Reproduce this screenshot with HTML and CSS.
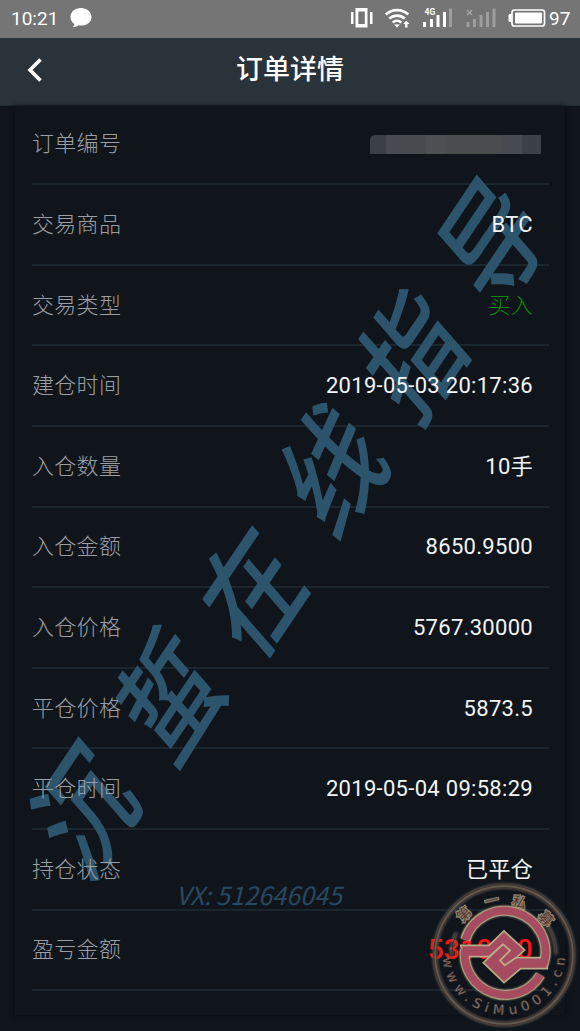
FILE: index.html
```
<!DOCTYPE html>
<html lang="zh-CN">
<head>
  <meta charset="UTF-8">
  <meta name="viewport" content="width=device-width, initial-scale=1.0">
  <title>订单详情</title>
  <link rel="stylesheet" href="styles.css">
</head>
<body>
  <!-- 状态栏 -->
  <div class="status-bar">
    <span class="time">10:21</span>
    <svg class="chat" width="22" height="20" viewBox="0 0 22 20"><path d="M11 0C5 0 .5 3.800 .5 9c0 3 1.500 5.500 3.900 7-.2 1.200-.8 2.300-1.700 3.300 2.300 0 4.200-.7 5.700-2 .8.2 1.700.3 2.600.3 6 0 10.500-3.700 10.500-8.600S17 0 11 0z" fill="#fff"/></svg>
    <svg class="status-icons" width="200" height="38" viewBox="350 0 200 38" fill="#fff">
      <path d="M350 12h2.500v12H350zM369 12h2.500v12H369z"/>
      <path fill-rule="evenodd" d="M354.500 8h12v19.500h-12zM357.300 11.500v12.500h6.500V11.500z"/>
      <g fill="none" stroke="#fff" stroke-width="2.700">
        <path d="M384.800 14.500a16.500 16.500 0 0 1 22.500 0"/>
        <path d="M388.300 18.600a11.500 11.500 0 0 1 15.500 0"/>
        <path d="M391.800 22.500a6.500 6.500 0 0 1 8.500 0"/>
      </g>
      <path d="M393 24.500h6l-3 3z"/>
      <path d="M405.300 20.500l3.200 3.500h-2v3.500h-2.400V24h-2z"/>
      <text class="net" x="423.500" y="15">4G</text>
      <path d="M422 22h3v5h-3zM429 19h3v8h-3zM435.500 15h3v12h-3zM442 12h3v15h-3z"/>
      <path opacity=".3" d="M448 8.500h3V27h-3zM465.500 22h3v5h-3zM472 19h3v8h-3zM478.500 15h3v12h-3zM485 12h3v15h-3zM491.500 8.500h3V27h-3z"/>
      <path d="M466 10l5 5M471 10l-5 5" stroke="#a3a3a3" stroke-width="1.500"/>
      <rect x="511" y="10" width="32.500" height="16" rx="2.500" fill="none" stroke="#fff" stroke-width="1.700"/>
      <rect x="514" y="12.500" width="27" height="11" rx="1"/>
      <path d="M510.500 14h-1.500q-1.500 0-1.500 1.500v5q0 1.500 1.500 1.500h1.500z"/>
    </svg>
    <span class="battery">97</span>
  </div>

  <!-- 标题栏 -->
  <header class="nav-bar">
    <svg class="back" width="16" height="26" viewBox="0 0 16 26"><path d="M13.500 2.500L3 13l10.500 10.500" fill="none" stroke="#fff" stroke-width="3.600"/></svg>
    <h1>订单详情</h1>
  </header>

  <main class="content">
    <!-- 水印 -->
    <svg class="watermark" width="580" height="925" viewBox="0 106 580 925">
      <g class="brush">
        <text transform="translate(86 811) rotate(-56) skewX(-15) scale(.88 1)" y="42">沉</text>
        <text transform="translate(171 697) rotate(-56) skewX(-15) scale(.88 1)" y="42">蜇</text>
        <text transform="translate(253 592) rotate(-56) skewX(-15) scale(.88 1)" y="42">在</text>
        <text transform="translate(334 470) rotate(-56) skewX(-15) scale(.88 1)" y="42">线</text>
        <text transform="translate(414 355) rotate(-56) skewX(-15) scale(.88 1)" y="42">指</text>
        <text transform="translate(493 242) rotate(-56) skewX(-15) scale(.88 1)" y="42">导</text>
      </g>
      <text class="contact" y="905" x="176 190 204 216 230 244 258 272 286 300 314 328">VX:512646045</text>
    </svg>

    <!-- 订单信息 -->
    <div class="card">
      <div class="row"><span class="label">订单编号</span><span class="mosaic"></span></div>
      <div class="row"><span class="label">交易商品</span><span class="value">BTC</span></div>
      <div class="row"><span class="label">交易类型</span><span class="value cn buy">买入</span></div>
      <div class="row"><span class="label">建仓时间</span><span class="value">2019-05-03 20:17:36</span></div>
      <div class="row"><span class="label">入仓数量</span><span class="value cn">10手</span></div>
      <div class="row"><span class="label">入仓金额</span><span class="value">8650.9500</span></div>
      <div class="row"><span class="label">入仓价格</span><span class="value">5767.30000</span></div>
      <div class="row"><span class="label">平仓价格</span><span class="value">5873.5</span></div>
      <div class="row"><span class="label">平仓时间</span><span class="value">2019-05-04 09:58:29</span></div>
      <div class="row"><span class="label">持仓状态</span><span class="value cn">已平仓</span></div>
      <div class="row"><span class="label">盈亏金额</span><span class="value profit">5310.00</span></div>
    </div>
  </main>

  <!-- 印章 -->
  <svg class="seal" width="170" height="161" viewBox="0 0 510 483">
    <defs>
      <path id="seal-bottom" d="M98 250a184 184 0 0 0 368 0"/>
    </defs>
    <g fill="none">
      <g class="halo">
        <circle cx="282" cy="255" r="207" stroke-width="13"/>
        <path d="M139 188a158 158 0 0 0-14 72M410 163a158 158 0 0 1 28 90" stroke-width="9"/>
      </g>
      <g class="thin">
        <circle cx="282" cy="255" r="211"/>
        <circle cx="282" cy="255" r="202"/>
        <path d="M139 188a158 158 0 0 0-14 72M410 163a158 158 0 0 1 28 90"/>
      </g>
    </g>
    <g class="seal-text">
      <text transform="translate(162 133) rotate(-44)" y="15">第</text>
      <text transform="translate(245 92) rotate(-13)" y="15">一</text>
      <text transform="translate(328 97) rotate(15)" y="15">私</text>
      <text transform="translate(408 146) rotate(48)" y="15">募</text>
    </g>
    <text class="seal-url"><textPath href="#seal-bottom" startOffset="14" textLength="550">www.SiMu001.cn</textPath></text>
    <g transform="translate(132 108)">
      <g class="ring-edge">
        <path d="M34 101A122 122 0 0 1 269 174"/>
        <path d="M33 130A122 122 0 0 0 259 207"/>
      </g>
      <g class="mark">
        <path d="M20 118H105L150 75L212 132L187 155L152 178L138 163L168 133L147 115L105 152H30z"/>
        <path d="M280 188H200L150 230L88 170L147 115L168 133L138 163L152 178L187 155H280z"/>
      </g>
      <g class="ring">
        <path d="M34 101A122 122 0 0 1 269 174"/>
        <path d="M33 130A122 122 0 0 0 259 207"/>
      </g>
    </g>
  </svg>
</body>
</html>
```
FILE: styles.css
```
* {
  box-sizing: border-box;
}

body {
  position: relative;
  margin: 0;
  width: 580px;
  height: 1031px;
  overflow: hidden;
  background: #10151c;
  color: #f2f5f7;
  font-family: Roboto, "Noto Sans CJK SC", sans-serif;
}

/* 状态栏 */
.status-bar {
  display: flex;
  align-items: center;
  height: 38px;
  padding: 0 10px 2px 11px;
  background: #757575;
  color: #fff;
  font-size: 19px;
}

.time {
  width: 47px;
}

.chat {
  margin-left: 12px;
}

.status-icons {
  margin: 2px 0 0 auto;
}

.battery {
  width: 21px;
  margin-left: -2px;
}

.net {
  font-size: 8.5px;
  font-weight: 700;
}

/* 标题栏 */
.nav-bar {
  display: flex;
  align-items: center;
  height: 68px;
  padding: 0 27px;
  background: #2a333a;
  border-bottom: 1px solid #202a30;
}

.back {
  margin-top: -3px;
}

.nav-bar h1 {
  flex: 1;
  margin: -3px 16px 0 0;
  font-size: 27px;
  line-height: 40px;
  font-weight: 500;
  text-align: center;
  color: #fff;
}

/* 订单卡片 */
.content {
  position: relative;
  height: 925px;
  padding: 0 15px;
}

.card {
  height: 909px;
  padding: 0 16px 0 17px;
  box-shadow: 0 0 4px #080c11;
}

.row {
  display: flex;
  align-items: center;
  justify-content: space-between;
  height: 80.6px;
  padding: 0 16px 0 0;
  border-bottom: 2px solid #1b262f;
}

.row:first-child {
  height: 79.2px;
  padding-bottom: 3px;
}

.label,
.value {
  z-index: 2;
  font-size: 22px;
  letter-spacing: 0.3px;
}

.label {
  padding-bottom: 5px;
  color: #9b9fa4;
  font-weight: 300;
}

.cn {
  padding-bottom: 5px;
}

.buy {
  color: #098a0d;
  font-weight: 300;
}

.profit {
  color: #f81414;
  font-size: 28px;
  font-weight: 500;
}

.mosaic {
  width: 171px;
  height: 19px;
  margin: 3px -8px 0 0;
  border-top-left-radius: 5px;
  background: linear-gradient(90deg, #3b3f47 0 16px, #474b50 16px 56px, #4c5053 56px 75px, #494d4d 75px 132px, #474a50 132px 152px, #3c4048 152px);
}

/* 水印 */
.watermark {
  position: absolute;
  top: 0;
  left: 0;
  z-index: 1;
}

.brush {
  fill: #2d546d;
  font-family: "Noto Sans CJK SC", sans-serif;
  font-size: 115px;
  font-weight: 500;
  text-anchor: middle;
}

.contact {
  fill: #28495f;
  font-family: "Noto Sans CJK SC", sans-serif;
  font-size: 25px;
  font-style: italic;
}

/* 印章 */
.seal {
  position: absolute;
  left: 410px;
  top: 870px;
  z-index: 3;
}

.halo {
  stroke: #686657;
  filter: blur(4px);
}

.thin {
  stroke: #4b2e2d;
  stroke-width: 3;
}

.seal-text {
  fill: #5b302f;
  stroke: #8b8771;
  stroke-width: 7;
  paint-order: stroke;
  font-family: "Noto Sans CJK SC", sans-serif;
  font-size: 42px;
  text-anchor: middle;
}

.seal-url {
  fill: #90897a;
  stroke: #583c39;
  stroke-width: 1.5;
  font-family: "DejaVu Sans", sans-serif;
  font-size: 40px;
}

.ring-edge {
  fill: none;
  stroke: #a79c7c;
  stroke-width: 30;
  filter: drop-shadow(0 0 3px #a79c7c);
}

.ring {
  fill: none;
  stroke: #a64b60;
  stroke-width: 23;
}

.mark path {
  fill: #a64b60;
  stroke: #b8ac88;
  stroke-width: 5;
}
```
